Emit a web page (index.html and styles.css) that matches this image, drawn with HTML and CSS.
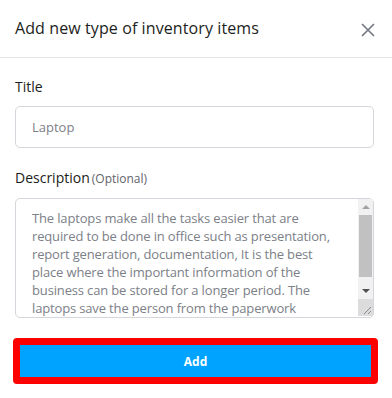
FILE: index.html
```html
<!DOCTYPE html>
<html lang="en">
<head>
    <meta charset="UTF-8">
    <meta name="viewport" content="width=device-width, initial-scale=1.0">
    <title>Add inventory type</title>
    <link rel="stylesheet" href="styles.css">
</head>
<body>
    <div class="modal">
        <div class="modal-header">
            <h2>Add new type of inventory items</h2>
            <button class="close-btn" aria-label="Close">
                <svg width="14" height="14" viewBox="0 0 14 14">
                    <path d="M1 1 L13 13 M13 1 L1 13" stroke="#71767f" stroke-width="1.6" fill="none"/>
                </svg>
            </button>
        </div>

        <form class="modal-body">
            <div class="field">
                <label for="title">Title</label>
                <input type="text" id="title" value="Laptop">
            </div>

            <div class="field">
                <label for="description">Description<span class="optional">(Optional)</span></label>
                <div class="textarea-wrap">
                    <textarea id="description">The laptops make all the tasks easier that are required to be done in office such as presentation, report generation, documentation, It is the best place where the important information of the business can be stored for a longer period. The laptops save the person from the paperwork</textarea>
                    <!-- scrollbar drawn by hand so it shows in every browser -->
                    <div class="scrollbar">
                        <div class="sb-btn"><span class="arrow-up"></span></div>
                        <div class="sb-track"><div class="sb-thumb"></div></div>
                        <div class="sb-btn"><span class="arrow-down"></span></div>
                        <div class="sb-corner">
                            <svg width="15" height="17" viewBox="0 0 15 17">
                                <path d="M6 15 L13 8 M10 15 L13 12" stroke="#8c8c8c" stroke-width="1" fill="none"/>
                            </svg>
                        </div>
                    </div>
                </div>
            </div>

            <button type="button" class="add-btn">Add</button>
        </form>
    </div>
</body>
</html>
```

FILE: styles.css
```css
* {
    margin: 0;
    padding: 0;
    box-sizing: border-box;
}

body {
    font-family: 'Open Sans', 'DejaVu Sans', sans-serif;
    background: white;
    color: #1f2328;
}

.modal {
    width: 392px;
}

.modal-header {
    height: 58px;
    display: flex;
    align-items: center;
    justify-content: space-between;
    padding: 0 17px 2px 15px;
    border-bottom: 1px solid #e4e5e7;
}

.modal-header h2 {
    font-size: 16px;
    font-weight: 500;
    letter-spacing: 0.1px;
    color: #1c1e21;
}

.close-btn {
    background: none;
    border: none;
    cursor: pointer;
    display: flex;
    margin-top: 4px;
}

.modal-body {
    padding: 19px 18px 0 15px;
}

.field {
    display: flex;
    flex-direction: column;
    margin-bottom: 20px;
}

.field label {
    font-size: 14px;
    font-weight: 500;
    color: #1b1d20;
    line-height: 20px;
    margin-bottom: 9px;
}

.optional {
    font-size: 12px;
    font-weight: 400;
    color: #5f646b;
    margin-left: 2px;
}

.field input,
.field textarea {
    font-family: inherit;
    width: 100%;
    border: 1px solid #d3d6da;
    border-radius: 5px;
    color: #7c8088;
    outline: none;
}

.field input {
    height: 42px;
    padding: 0 16px;
    font-size: 13px;
}

.textarea-wrap {
    position: relative;
}

.field textarea {
    display: block;
    height: 120px;
    padding: 10px 32px 10px 16px;
    font-size: 13px;
    letter-spacing: -0.15px;
    line-height: 18px;
    resize: none;
    overflow: hidden;
}

.scrollbar {
    position: absolute;
    top: 1px;
    right: 1px;
    bottom: 2px;
    width: 15px;
    display: flex;
    flex-direction: column;
    background: #f1f1f1;
}

.sb-btn {
    height: 16px;
    display: flex;
    align-items: center;
    justify-content: center;
}

.arrow-up {
    border-left: 4px solid transparent;
    border-right: 4px solid transparent;
    border-bottom: 4px solid #a3a3a3;
}

.arrow-down {
    border-left: 4px solid transparent;
    border-right: 4px solid transparent;
    border-top: 4px solid #505050;
}

.sb-track {
    flex: 1;
}

.sb-thumb {
    height: 62px;
    margin: 0 1px;
    background: #c1c1c1;
}

.sb-corner {
    height: 17px;
    background: #dcdcdc;
    display: flex;
}

.add-btn {
    display: block;
    width: 365px;
    height: 46px;
    margin-left: -2px;
    background: #00a3ff;
    border: 7px solid #ff0000;
    border-radius: 4px;
    color: white;
    font-family: inherit;
    font-size: 12px;
    font-weight: 700;
    cursor: pointer;
}
```
